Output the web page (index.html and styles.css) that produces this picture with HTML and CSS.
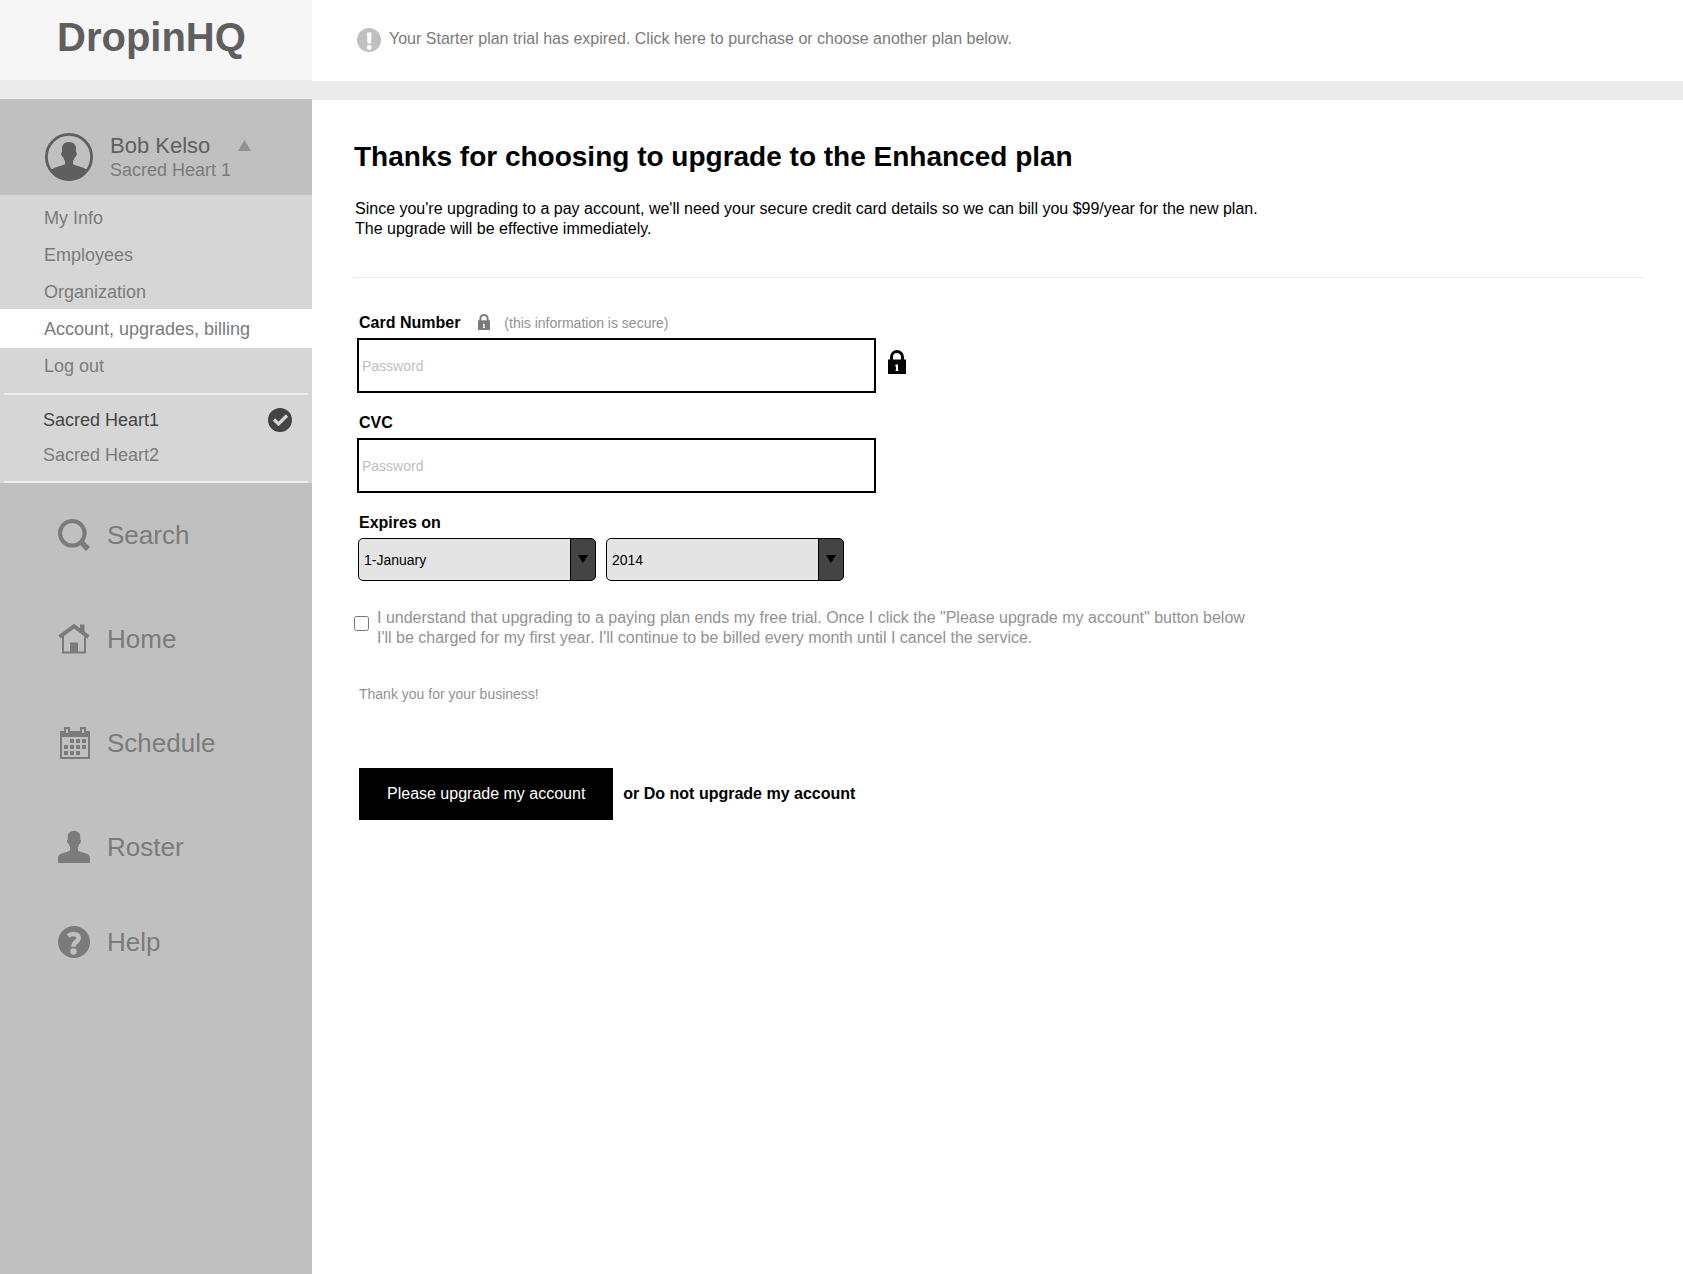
FILE: index.html
```
<!DOCTYPE html>
<html lang="en">
  <head>
    <meta charset="UTF-8" />
    <meta name="viewport" content="width=device-width, initial-scale=1.0" />
    <title>DropinHQ - Upgrade</title>
    <link rel="stylesheet" href="styles.css">
  </head>
  <body>
    <div class="page">
      <!-- Sidebar -->
      <aside class="sidebar">
        <a href="#" class="logo">DropinHQ</a>

        <button type="button" class="profile">
          <svg class="avatar" viewBox="0 0 48 48" width="48" height="48" aria-hidden="true">
            <circle cx="24" cy="24" r="22.6" fill="none" stroke="#5f5f5f" stroke-width="2.8" />
            <path fill="#5f5f5f" d="M24 9c-4.600 0-7 2.800-7 6.600v3.600c-1.200.2-1 2.400 0 4 .5.800 1 .9 1.300 1 .4 1.900 1.200 3 1.700 3.800v3C18 33 9 33.500 5.500 37.500A23 23 0 0 0 42.500 37.500C39 33.500 30 33 28 31v-3c.5-.8 1.300-1.900 1.700-3.800.3-.1.800-.2 1.300-1 1-1.600 1.200-3.800 0-4v-3.600C31 11.800 28.600 9 24 9z" />
          </svg>
          <span class="profile-text">
            <span class="profile-name">Bob Kelso</span>
            <span class="profile-org">Sacred Heart 1</span>
          </span>
          <svg class="caret" viewBox="0 0 13 11" width="13" height="11" aria-hidden="true">
            <path fill="#929292" d="M6.500 0 13 11H0z" />
          </svg>
        </button>

        <div class="submenu">
          <ul class="menu">
            <li><a href="#">My Info</a></li>
            <li><a href="#">Employees</a></li>
            <li><a href="#">Organization</a></li>
            <li class="active"><a href="#">Account, upgrades, billing</a></li>
            <li><a href="#">Log out</a></li>
          </ul>
          <ul class="orgs">
            <li>
              <a href="#" class="selected">Sacred Heart1
                <svg viewBox="0 0 24 24" width="24" height="24" aria-hidden="true">
                  <circle cx="12" cy="12" r="12" fill="#444" />
                  <path d="M6 11.500l4.500 4.500 8.500-8.500" fill="none" stroke="#d6d6d6" stroke-width="3.200" />
                </svg>
              </a>
            </li>
            <li><a href="#">Sacred Heart2</a></li>
          </ul>
        </div>

        <nav class="main-nav">
          <a href="#">
            <svg viewBox="0 0 32 32" width="32" height="32" aria-hidden="true">
              <circle cx="14.300" cy="14.300" r="12.300" fill="none" stroke="#7b7b7b" stroke-width="4" />
              <path d="M22.500 22.500l7.500 7.500" stroke="#7b7b7b" stroke-width="5.500" />
            </svg>
            Search
          </a>
          <a href="#">
            <svg viewBox="0 0 32 32" width="32" height="32" aria-hidden="true">
              <path d="M5 13v16.500h22V13" fill="none" stroke="#7b7b7b" stroke-width="2" />
              <path d="M1.500 14 16 3.200 30.500 14" fill="none" stroke="#7b7b7b" stroke-width="4" />
              <path d="M22 1.500h4.500V10L22 6.500zM12 19.500h8V30h-8z" fill="#7b7b7b" />
            </svg>
            Home
          </a>
          <a href="#">
            <svg viewBox="0 0 32 32" width="32" height="32" aria-hidden="true">
              <path fill="#7b7b7b" fill-rule="evenodd" d="M2 4h4V0h6v4h10V0h6v4h4v28H2zM4 10v20h26V10zM8 2v4h2V2zM24 2v4h2V2z" />
              <path fill="#7b7b7b" d="M12 12h4v4h-4zM18 12h4v4h-4zM24 12h4v4h-4zM6 18h4v4H6zM12 18h4v4h-4zM18 18h4v4h-4zM24 18h4v4h-4zM6 24h4v4H6zM12 24h4v4h-4zM18 24h4v4h-4z" />
            </svg>
            Schedule
          </a>
          <a href="#">
            <svg viewBox="0 0 32 32" width="32" height="32" aria-hidden="true">
              <path fill="#7b7b7b" d="M16 0c-4.200 0-6.300 2.400-6.300 6v2.600c-1 .3-.8 2.400.2 3.900.4.600.9.700 1.200.7.400 1.700.6 2.600 1 3.300v3C9 22 0 21.500 0 27v5h32v-5c0-5.500-9-5-12.100-7.500v-3c.4-.7.600-1.600 1-3.300.3 0 .8-.1 1.200-.7 1-1.500 1.200-3.600.2-3.900V6c0-3.600-2.100-6-6.300-6z" />
            </svg>
            Roster
          </a>
          <a href="#">
            <svg viewBox="0 0 32 32" width="32" height="32" aria-hidden="true">
              <circle cx="16" cy="16" r="16" fill="#7b7b7b" />
              <path d="M10.200 10c3.500-3.400 10.500-2.200 10.500 2 0 4-5.200 3.300-5.200 8.800" fill="none" stroke="#c0c0c0" stroke-width="4.600" />
              <circle cx="15.500" cy="25.500" r="3.200" fill="#c0c0c0" />
            </svg>
            Help
          </a>
        </nav>
      </aside>

      <!-- Content -->
      <div class="content">
        <header class="notice">
          <svg viewBox="0 0 24 24" width="24" height="24" aria-hidden="true">
            <circle cx="12" cy="12" r="12" fill="#c0c0c0" />
            <path d="M10 4.500h4.500l-.5 11h-3.500z" fill="#fff" />
            <circle cx="12.200" cy="19.500" r="2.400" fill="#fff" />
          </svg>
          <p>Your Starter plan trial has expired. Click here to purchase or choose another plan below.</p>
        </header>

        <main class="main">
          <h1>Thanks for choosing to upgrade to the Enhanced plan</h1>
          <p class="intro">Since you're upgrading to a pay account, we'll need your secure credit card details so we can bill you $99/year for the new plan.<br>The upgrade will be effective immediately.</p>
          <hr>

          <form class="upgrade-form">
            <div class="field">
              <div class="label-row">
                <label for="card-number">Card Number</label>
                <svg viewBox="0 0 18 24" width="12" height="16" aria-hidden="true">
                  <path d="M3.500 11V7a5.500 5.500 0 0 1 11 0v4" fill="none" stroke="#7b7b7b" stroke-width="3" />
                  <path fill="#7b7b7b" d="M0 9.500h18V24H0z" />
                  <path fill="#fff" d="M7.500 14.500H10V20h.5v1h-3v-1H8v-3h-.5z" />
                </svg>
                <span class="hint">(this information is secure)</span>
              </div>
              <div class="input-row">
                <input type="password" id="card-number" placeholder="Password" />
                <svg viewBox="0 0 18 24" width="18" height="24" aria-hidden="true">
                  <path d="M3.500 11V7a5.500 5.500 0 0 1 11 0v4" fill="none" stroke="#000" stroke-width="3" />
                  <path d="M0 9.500h18V24H0z" />
                  <path fill="#fff" d="M7.500 14.500H10V20h.5v1h-3v-1H8v-3h-.5z" />
                </svg>
              </div>
            </div>

            <div class="field">
              <label for="cvc">CVC</label>
              <input type="password" id="cvc" placeholder="Password" />
            </div>

            <div class="field">
              <label for="expires-month">Expires on</label>
              <div class="selects">
                <div class="select">
                  <select id="expires-month">
                    <option>1-January</option>
                    <option>2-February</option>
                    <option>3-March</option>
                  </select>
                </div>
                <div class="select">
                  <select id="expires-year" aria-label="Expiry year">
                    <option>2014</option>
                    <option>2015</option>
                    <option>2016</option>
                  </select>
                </div>
              </div>
            </div>

            <div class="agree">
              <input type="checkbox" id="agree" />
              <label for="agree">I understand that upgrading to a paying plan ends my free trial. Once I click the "Please upgrade my account" button below<br>I'll be charged for my first year. I'll continue to be billed every month until I cancel the service.</label>
            </div>

            <p class="thanks">Thank you for your business!</p>

            <div class="buttons">
              <button type="button">Please upgrade my account</button>
              <a href="#">or Do not upgrade my account</a>
            </div>
          </form>
        </main>
      </div>
    </div>
  </body>
</html>
```
FILE: styles.css
```
* {
  box-sizing: border-box;
}
body {
  margin: 0;
  font-family: "Liberation Sans", Arial, sans-serif;
  font-size: 16px;
  line-height: 20px;
  color: #000;
  background-color: #fff;
}
h1, p, ul {
  margin: 0;
  padding: 0;
}
ul {
  list-style: none;
}
a {
  color: inherit;
  text-decoration: none;
}
svg {
  display: block;
  flex-shrink: 0;
}
button, input, select {
  font-family: inherit;
}
.page {
  display: flex;
  min-height: 100vh;
}

/* Sidebar */
.sidebar {
  width: 312px;
  flex-shrink: 0;
  background-color: #c0c0c0;
  color: #7b7b7b;
}
.logo {
  display: flex;
  align-items: center;
  height: 99px;
  padding: 0 57px 6px;
  border-bottom: 19px solid #ebebeb;
  background-color: #f6f6f6;
  color: #5f5f5f;
  font-size: 40px;
  font-weight: bold;
}
.profile {
  display: flex;
  align-items: flex-start;
  width: 100%;
  height: 96px;
  padding: 34px 0 0 45px;
  border: none;
  background: none;
  text-align: left;
  cursor: pointer;
}
.profile-text {
  width: 128px;
  margin: 1px 0 0 17px;
}
.profile-name,
.profile-org {
  display: block;
  line-height: 24px;
}
.profile-name {
  font-size: 22px;
  color: #5f5f5f;
}
.profile-org {
  font-size: 18px;
  color: #7b7b7b;
}
.caret {
  margin-top: 7px;
}
.submenu {
  background-color: #d6d6d6;
  font-size: 18px;
}
.menu {
  padding: 4px 0 9px;
}
.menu a {
  display: block;
  height: 37px;
  padding-left: 44px;
  line-height: 39px;
}
.menu .active {
  margin: -1px 0;
  padding: 1px 0;
  background-color: #fff;
}
.orgs {
  margin: 0 4px;
  padding: 7px 0 9px;
  border-top: 2px solid #ededed;
  border-bottom: 2px solid #ededed;
}
.orgs a {
  display: flex;
  align-items: center;
  justify-content: space-between;
  height: 35px;
  padding: 0 16px 0 39px;
}
.orgs .selected {
  color: #444;
}
.main-nav {
  display: flex;
  flex-direction: column;
  gap: 72px;
  padding: 36px 0 36px 58px;
  font-size: 26px;
  line-height: 32px;
}
.main-nav a {
  display: flex;
  align-items: center;
  gap: 17px;
}
.main-nav a:last-child {
  margin-top: -9px;
}

/* Content */
.content {
  flex: 1;
}
.notice {
  display: flex;
  gap: 8px;
  height: 100px;
  padding: 28px 45px 0;
  border-bottom: 19px solid #ebebeb;
  color: #7b7b7b;
}
.notice p {
  line-height: 22px;
}
.main {
  padding: 41px 39px 40px 42px;
}
h1 {
  font-size: 28px;
  line-height: 32px;
}
.intro {
  margin-top: 26px;
  padding-left: 1px;
}
hr {
  margin: 38px 0 35px;
  border: none;
  border-top: 1px solid #ebebeb;
}
.field {
  margin: 0 0 20px 3px;
}
.field label {
  display: block;
  margin-bottom: 5px;
  padding-left: 2px;
  font-weight: bold;
}
.label-row,
.input-row {
  display: flex;
}
.label-row svg {
  margin: 1px 14px 0 18px;
}
.hint {
  font-size: 14px;
  color: #929292;
}
.field input {
  display: block;
  width: 519px;
  max-width: 100%;
  height: 55px;
  padding: 0 3px;
  border: 2px solid #000;
  background-color: #fff;
  font-size: 14px;
}
.field input::placeholder {
  color: #c0c0c0;
}
.input-row svg {
  margin: 12px 0 0 12px;
}
.selects {
  display: flex;
  gap: 10px;
  padding-left: 1px;
}
.select {
  position: relative;
  width: 238px;
}
.select select {
  appearance: none;
  display: block;
  width: 100%;
  height: 43px;
  padding: 0 30px 0 5px;
  border: 1px solid #000;
  border-radius: 5px;
  background: linear-gradient(to right, #000 1px, #444 1px) right / 25px 100% no-repeat #e4e4e4;
  color: #000;
  font-size: 14px;
}
/* dropdown arrow */
.select::after {
  content: "";
  position: absolute;
  top: 17px;
  right: 8px;
  border: 5px solid transparent;
  border-top: 8px solid #000;
  border-bottom: none;
  pointer-events: none;
}
.agree {
  display: flex;
  gap: 8px;
  margin-top: 27px;
  color: #929292;
}
.agree input {
  width: 15px;
  height: 15px;
  margin: 8px 0 0;
}
.thanks {
  margin: 36px 0 64px 5px;
  font-size: 14px;
  color: #929292;
}
.buttons {
  display: flex;
  align-items: center;
  gap: 10px;
  margin-left: 5px;
}
.buttons button {
  height: 52px;
  padding: 0 28px;
  border: none;
  background-color: #000;
  color: #fff;
  font-size: 16px;
  cursor: pointer;
}
.buttons a {
  font-weight: bold;
}
```
